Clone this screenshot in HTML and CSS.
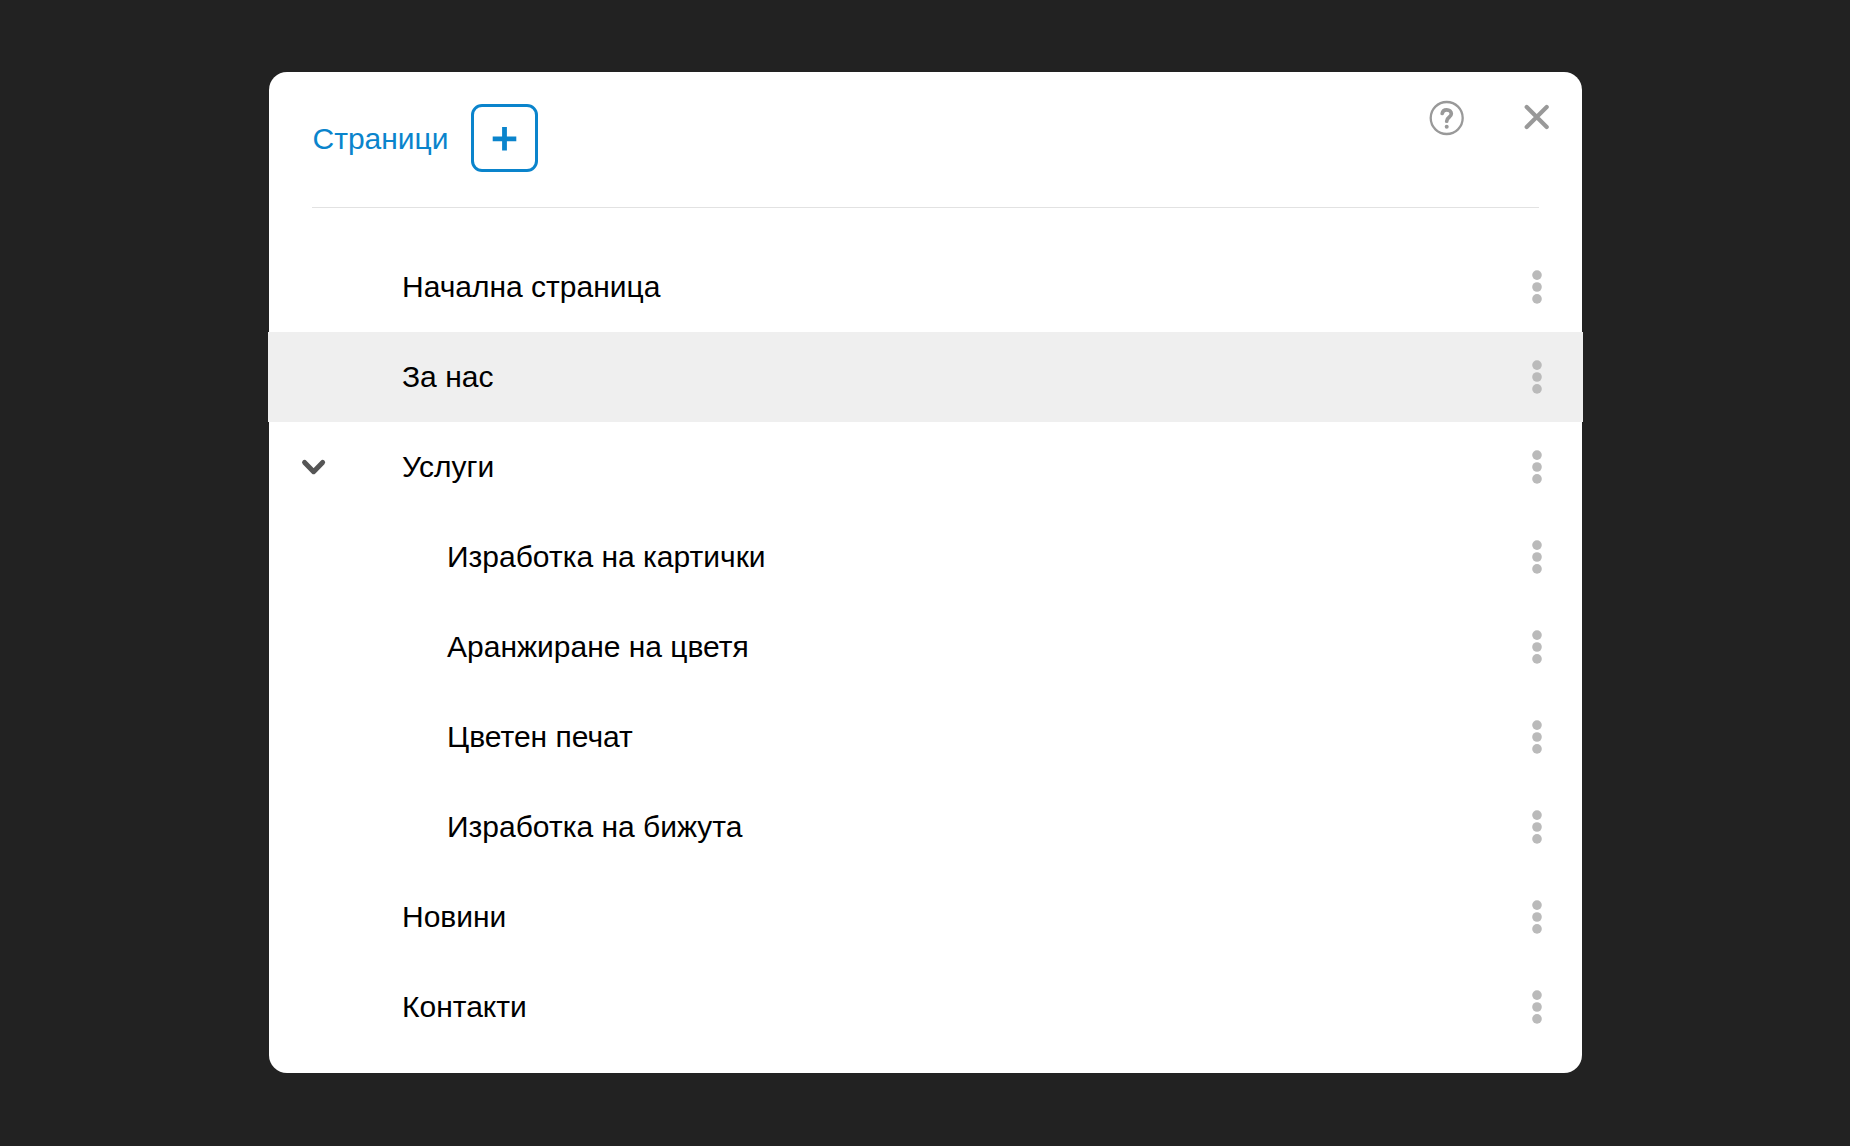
FILE: index.html
```html
<!DOCTYPE html>
<html lang="bg">

<head>
    <meta charset="UTF-8">
    <meta name="viewport" content="width=device-width, initial-scale=1.0">
    <title>Страници</title>
    <link rel="stylesheet" href="styles.css">
</head>

<body>
    <!-- Икона с три точки, използва се във всеки ред -->
    <svg class="sprite" width="0" height="0">
        <symbol id="dots" viewBox="0 0 10 34">
            <circle cx="5" cy="5.1" r="4.8" />
            <circle cx="5" cy="17" r="4.8" />
            <circle cx="5" cy="28.9" r="4.8" />
        </symbol>
    </svg>

    <div class="dialog">
        <div class="header">
            <h1>Страници</h1>
            <button class="add-button" title="Добави страница">
                <svg width="26" height="26" viewBox="0 0 26 26">
                    <path d="M13.5 2v23.6M1.7 13.8h23.6" />
                </svg>
            </button>
            <div class="header-icons">
                <button title="Помощ">
                    <svg width="36" height="36" viewBox="0 0 36 36">
                        <circle cx="17.7" cy="18" r="16" stroke-width="2.3" />
                        <path d="M13.2 13.5C13.6 11.2 15.5 9.8 17.7 9.8C20.3 9.8 22.3 11.4 22.3 13.8C22.3 17.4 17.7 17.2 17.7 21.2" stroke-width="3.7" />
                        <circle class="dot" cx="17.7" cy="26.8" r="2" />
                    </svg>
                </button>
                <button title="Затвори">
                    <svg width="28" height="28" viewBox="0 0 28 28">
                        <path d="M3.7 3.1L23.7 23.1M23.7 3.1L3.7 23.1" stroke-width="4.2" />
                    </svg>
                </button>
            </div>
        </div>

        <ul class="pages">
            <li><span>Начална страница</span><button class="menu"><svg><use href="#dots" /></svg></button></li>
            <li class="active"><span>За нас</span><button class="menu"><svg><use href="#dots" /></svg></button></li>
            <li>
                <button class="toggle">
                    <svg width="26" height="18" viewBox="0 0 26 18">
                        <path d="M3.6 4.4L12.6 13.7L21.6 4.4" />
                    </svg>
                </button>
                <span>Услуги</span><button class="menu"><svg><use href="#dots" /></svg></button>
            </li>
            <li class="sub"><span>Изработка на картички</span><button class="menu"><svg><use href="#dots" /></svg></button></li>
            <li class="sub"><span>Аранжиране на цветя</span><button class="menu"><svg><use href="#dots" /></svg></button></li>
            <li class="sub"><span>Цветен печат</span><button class="menu"><svg><use href="#dots" /></svg></button></li>
            <li class="sub"><span>Изработка на бижута</span><button class="menu"><svg><use href="#dots" /></svg></button></li>
            <li><span>Новини</span><button class="menu"><svg><use href="#dots" /></svg></button></li>
            <li><span>Контакти</span><button class="menu"><svg><use href="#dots" /></svg></button></li>
        </ul>
    </div>
</body>

</html>
```
FILE: styles.css
```css
* {
    box-sizing: border-box;
}

body {
    background-color: #222;
    color: #000;
    font-family: "Liberation Sans", Arial, sans-serif;
    font-size: 30px;
    display: flex;
    align-items: flex-start;
    justify-content: center;
    padding: 72px 0;
    margin: 0;
}

.sprite {
    position: absolute;
}

button {
    display: flex;
    align-items: center;
    justify-content: center;
    padding: 0;
    border: none;
    background: none;
    cursor: pointer;
}

.dialog {
    width: 1313px;
    height: 1001px;
    border-radius: 18px;
    background-color: #fff;
}

.header {
    display: flex;
    height: 136px;
    margin: 0 43px;
    padding-top: 32px;
    border-bottom: 1px solid #e2e2e2;
}

h1 {
    margin: 0 22px 0 1px;
    font-size: 30px;
    font-weight: normal;
    line-height: 70px;
    color: #0a84cc;
}

.add-button {
    width: 67px;
    height: 68px;
    border: 3px solid #0a84cc;
    border-radius: 11px;
}

.add-button path {
    stroke: #0a84cc;
    stroke-width: 4.8;
}

.header-icons {
    display: flex;
    gap: 58px;
    height: 36px;
    margin: -4px -12px 0 auto;
}

.header-icons svg {
    fill: none;
    stroke: #999;
    stroke-linecap: round;
}

.header-icons .dot {
    fill: #999;
    stroke: none;
}

.pages {
    margin: 34px -1px 0 -0.5px;
    padding: 0;
    list-style: none;
}

.pages li {
    display: flex;
    align-items: center;
    height: 90px;
    padding: 0 41px 0 134px;
}

.pages .active {
    background-color: #efefef;
}

.pages .sub {
    padding-left: 179px;
}

.toggle {
    width: 26px;
    margin: 0 75px 0 -101px;
}

.toggle path {
    fill: none;
    stroke: #555;
    stroke-width: 5;
    stroke-linecap: round;
    stroke-linejoin: round;
}

.menu {
    margin-left: auto;
}

.menu svg {
    width: 10px;
    height: 34px;
    fill: #bababa;
}
```
